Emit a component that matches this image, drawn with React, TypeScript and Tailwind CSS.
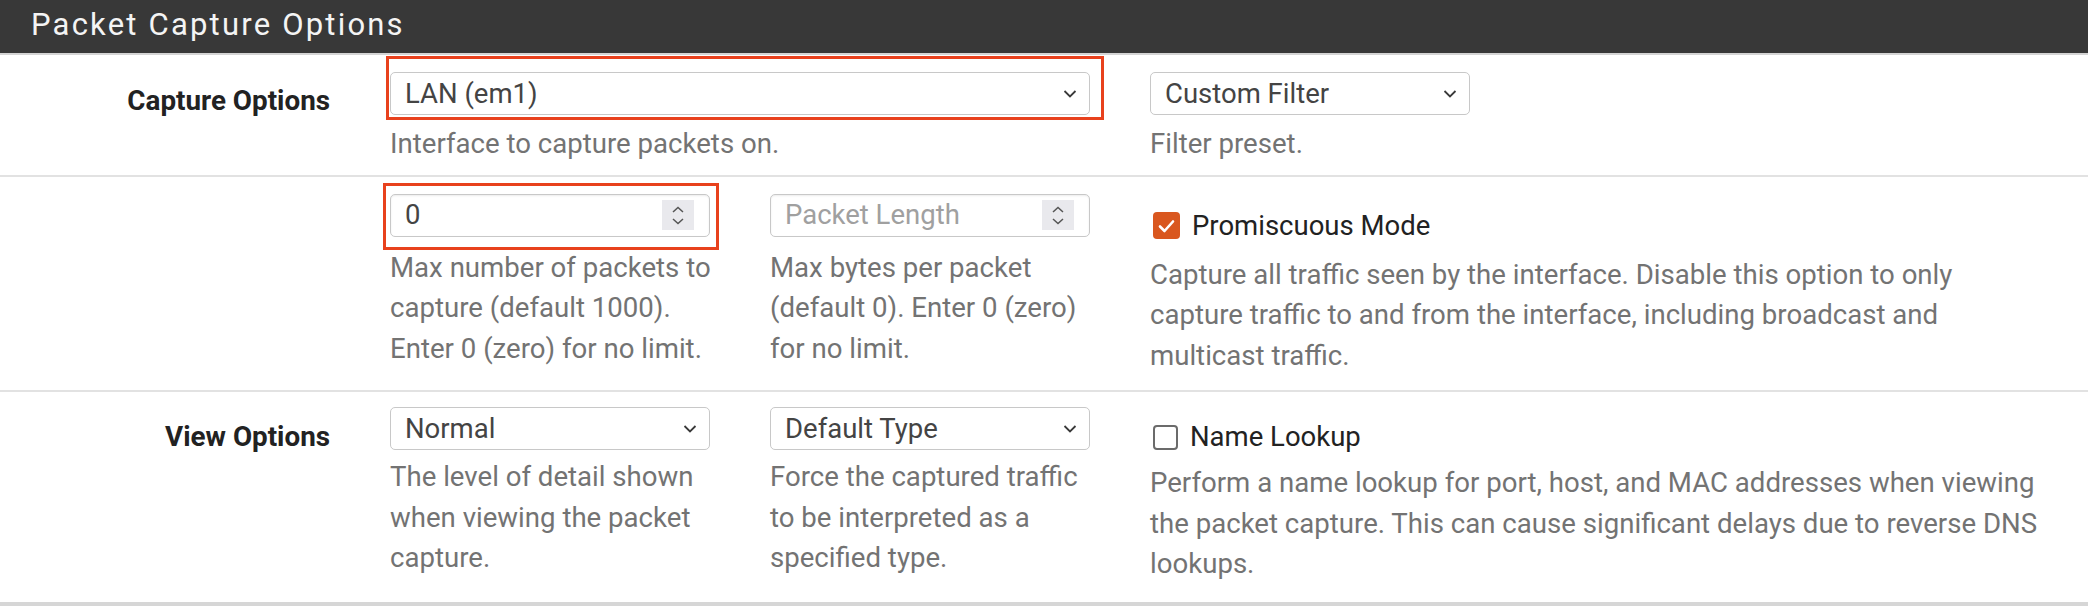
import type { ReactNode } from "react";

const Chevron = () => (
  <svg
    width="14"
    height="9"
    viewBox="0 0 14 9"
    className="pointer-events-none absolute right-[12px] top-1/2 -translate-y-1/2"
  >
    <path d="M1.5 1.5 7 7l5.5-5.5" fill="none" stroke="#3a3a3a" strokeWidth="1.8" />
  </svg>
);

const Spinner = () => (
  <div className="pointer-events-none absolute right-[15px] top-1/2 flex h-[30px] w-[32px] -translate-y-1/2 flex-col items-center justify-center gap-[5px] bg-[#e9e9ed]">
    <svg width="12" height="7" viewBox="0 0 12 7">
      <path d="M1 6 6 1.5 11 6" fill="none" stroke="#555" strokeWidth="1.5" />
    </svg>
    <svg width="12" height="7" viewBox="0 0 12 7">
      <path d="M1 1 6 5.5 11 1" fill="none" stroke="#555" strokeWidth="1.5" />
    </svg>
  </div>
);

const Select = ({ value, className = "" }: { value: string; className?: string }) => (
  <div className={`relative h-[43px] rounded-[5px] border border-[#c8c8c8] bg-white ${className}`}>
    <div className="flex h-full items-center pl-[14px] text-[27.5px] text-[#444]">{value}</div>
    <Chevron />
  </div>
);

const NumberInput = ({ value, placeholder }: { value?: string; placeholder?: string }) => (
  <div className="relative h-[43px] rounded-[5px] border border-[#c8c8c8] bg-white shadow-[inset_0_1px_2px_rgba(0,0,0,0.08)]">
    <div
      className={`flex h-full items-center pl-[14px] text-[27.5px] ${
        value ? "text-[#444]" : "text-[#a0a0a0]"
      }`}
    >
      {value ?? placeholder}
    </div>
    <Spinner />
  </div>
);

const Help = ({ children, className = "" }: { children: ReactNode; className?: string }) => (
  <p className={`text-[27.6px] leading-[40.5px] text-[#737373] ${className}`}>{children}</p>
);

const Check = ({ checked, label }: { checked: boolean; label: string }) => (
  <label className="flex h-[40px] items-center gap-[12px] pl-[3px]">
    {checked ? (
      <span className="flex h-[27px] w-[27px] items-center justify-center rounded-[4px] bg-[#d9571f]">
        <svg width="17" height="14" viewBox="0 0 17 14">
          <path d="M2 7.5 6.5 12 15 2.5" fill="none" stroke="#fff" strokeWidth="2.6" strokeLinecap="round" strokeLinejoin="round" />
        </svg>
      </span>
    ) : (
      <span className="h-[25px] w-[25px] rounded-[4px] border-[2.5px] border-[#6b6b6b] bg-white" />
    )}
    <span className="text-[27.5px] text-[#222]">{label}</span>
  </label>
);

export default function App() {
  return (
    <div className="w-[2088px] bg-white font-['Roboto','Liberation_Sans',sans-serif]">
      {/* --- PANEL HEADING --- */}
      <div className="flex h-[55px] items-center border-b-2 border-[#d4d4d4] bg-[#383838] pl-[31px]">
        <h2 className="pb-[2px] text-[31px] tracking-[2.2px] text-[#f4f4f4]">Packet Capture Options</h2>
      </div>

      {/* --- CAPTURE OPTIONS --- */}
      <div className="grid grid-cols-[330px_320px_320px_893px] items-start gap-x-[60px] border-b-2 border-[#e2e2e2] pt-[17px] pb-[10px]">
        <div className="mt-[9px] text-right text-[27.8px] font-bold leading-[40px] text-[#222]">Capture Options</div>
        <div className="col-span-2">
          <div className="relative">
            <Select value="LAN (em1)" />
            <span className="pointer-events-none absolute -top-[16px] -right-[14px] -bottom-[5px] -left-[4px] border-[3px] border-[#e8411d]" />
          </div>
          <Help className="mt-[9px]">Interface to capture packets on.</Help>
        </div>
        <div className="w-[320px]">
          <Select value="Custom Filter" />
          <Help className="mt-[9px]">Filter preset.</Help>
        </div>
      </div>

      {/* --- COUNT / LENGTH / PROMISCUOUS --- */}
      <div className="grid grid-cols-[330px_320px_320px_893px] items-start gap-x-[60px] border-b-2 border-[#e2e2e2] pt-[17px] pb-[14px]">
        <div />
        <div>
          <div className="relative">
            <NumberInput value="0" />
            <span className="pointer-events-none absolute -top-[11px] -right-[9px] -bottom-[13px] -left-[7px] border-[3px] border-[#e8411d]" />
          </div>
          <Help className="mt-[11px] w-[328px]">
            Max number of packets to capture (default 1000). Enter 0 (zero) for no limit.
          </Help>
        </div>
        <div>
          <NumberInput placeholder="Packet Length" />
          <Help className="mt-[11px] w-[328px]">Max bytes per packet (default 0). Enter 0 (zero) for no limit.</Help>
        </div>
        <div className="mt-[12px]">
          <Check checked label="Promiscuous Mode" />
          <Help className="mt-[9px]">
            Capture all traffic seen by the interface. Disable this option to only capture traffic to and from the
            interface, including broadcast and multicast traffic.
          </Help>
        </div>
      </div>

      {/* --- VIEW OPTIONS --- */}
      <div className="grid grid-cols-[330px_320px_320px_893px] items-start gap-x-[60px] border-b-4 border-[#d6d6d6] pt-[15px] pb-[17px]">
        <div className="mt-[10px] text-right text-[27.8px] font-bold leading-[40px] text-[#222]">View Options</div>
        <div>
          <Select value="Normal" />
          <Help className="mt-[7px] w-[328px]">The level of detail shown when viewing the packet capture.</Help>
        </div>
        <div>
          <Select value="Default Type" />
          <Help className="mt-[7px] w-[328px]">Force the captured traffic to be interpreted as a specified type.</Help>
        </div>
        <div className="mt-[10px]">
          <Check checked={false} label="Name Lookup" />
          <Help className="mt-[6px]">
            Perform a name lookup for port, host, and MAC addresses when viewing the packet capture. This can cause
            significant delays due to reverse DNS lookups.
          </Help>
        </div>
      </div>
    </div>
  );
}
